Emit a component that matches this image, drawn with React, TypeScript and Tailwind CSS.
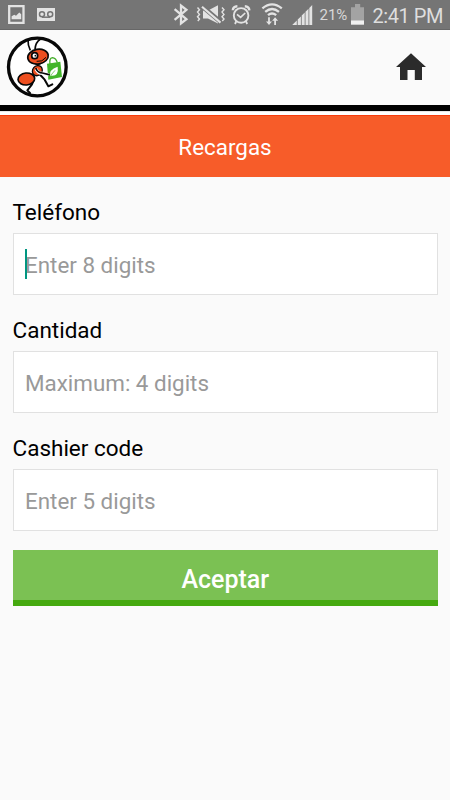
function StatusBar() {
  return (
    <div className="flex h-[30px] items-start border-b border-[#676767] bg-[#757575] text-[#e3e3e3]">
      {/* Screenshot notification */}
      <svg className="ml-[8px] shrink-0" width="17" height="29" viewBox="8 0 17 29">
        <path d="M9.2 6.2H23.5V22.8H9.2Z" fill="none" stroke="currentColor" strokeWidth="2.3" />
        <path d="M11.6 19.2V16.2L14.3 14.8L16 15.8L19.3 12.5L21.2 14.2V19.2Z" fill="currentColor" />
      </svg>
      {/* Voicemail */}
      <svg className="ml-[12px] shrink-0" width="18" height="29" viewBox="37 0 18 29">
        <path d="M37 8H55V21H37Z" fill="currentColor" />
        <g fill="none" stroke="#757575" strokeWidth="1.5">
          <circle cx="42" cy="14.2" r="2.5" />
          <circle cx="50.2" cy="14.2" r="2.5" />
          <path d="M42 17.2H50.2" />
        </g>
      </svg>

      {/* Bluetooth */}
      <svg className="ml-[118px] shrink-0" width="16" height="29" viewBox="173 0 16 29">
        <path
          d="M174.6 9.2L186.4 19.2L181 23.4V5.6L186.4 9.8L174.6 19.8"
          fill="none"
          stroke="currentColor"
          strokeWidth="2.3"
        />
      </svg>
      {/* Muted, vibrate */}
      <svg className="ml-[7px] shrink-0" width="30" height="29" viewBox="196 0 30 29">
        <path d="M203 10.5H208L218 5.2V23.4L208 18.4H203Z" fill="currentColor" />
        <path d="M201.5 5.8L221.5 22.8" stroke="#757575" strokeWidth="4.6" />
        <path d="M202 6.8L220.5 22.6" stroke="currentColor" strokeWidth="2.1" />
        <g fill="none" stroke="currentColor" strokeWidth="1.4">
          <path d="M197.5 7.5L199.5 9.8L197.5 12.1L199.5 14.4L197.5 16.7L199.5 19L197.8 21" />
          <path d="M222 7.5L224 9.8L222 12.1L224 14.4L222 16.7L224 19L222.3 21" />
        </g>
      </svg>
      {/* Alarm */}
      <svg className="ml-[5px] shrink-0" width="20" height="29" viewBox="231 0 20 29">
        <g fill="none" stroke="currentColor">
          <circle cx="241.1" cy="15.4" r="7.3" strokeWidth="1.9" />
          <path d="M237 14.3L240.6 17.3L245.2 13" strokeWidth="1.7" />
          <path d="M232.8 10.3Q233 6.5 237.4 6.3M244.8 6.3Q249 6.5 249.4 10.3" strokeWidth="2.4" />
          <path d="M236.4 21L235 24M245.8 21L247.2 24" strokeWidth="1.8" />
        </g>
      </svg>
      {/* Wi-Fi with traffic arrows */}
      <svg className="ml-[10px] shrink-0" width="22" height="29" viewBox="261 0 22 29">
        <g fill="none" stroke="currentColor" strokeWidth="2.3">
          <path d="M262.4 8.4Q272 .3 281.8 8.4" />
          <path d="M265.2 11.9Q272 6.1 279 11.9" />
          <path d="M268 15.2Q272 11.7 276.2 15.2" />
        </g>
        <path d="M268.1 17.2H269.9V21.5H272L269 25L266 21.5H268.1Z" fill="currentColor" />
        <path d="M274.2 25H276V20.7H278.1L275.1 17.2L272.1 20.7H274.2Z" fill="currentColor" />
      </svg>
      {/* Signal strength */}
      <svg className="ml-[9px] shrink-0" width="21" height="29" viewBox="292 0 21 29">
        <path
          d="M292.2 25L296.8 20.4V25ZM297.7 19.6L300.9 16.4V25H297.7ZM301.7 15.6L304.7 12.5V25H301.7ZM305.5 11.7L308.5 8.8V25H305.5ZM309.3 7.9L312.2 5V25H309.3Z"
          fill="currentColor"
        />
      </svg>
      <span className="ml-[6.5px] w-[28px] shrink-0 whitespace-nowrap text-[15px] leading-[31px] text-[#d8d8d8]">21%</span>
      {/* Battery */}
      <svg className="ml-[3.5px] shrink-0" width="13" height="29" viewBox="351 0 13 29">
        <path d="M355 4H360.2V7.2H364V21H351V7.2H355Z" fill="#a3a3a3" />
        <path d="M351 20.5H364V24.7H351Z" fill="#f0f0f0" />
      </svg>
      <span className="ml-[8.5px] whitespace-nowrap text-[20px] leading-[32px] tracking-[-0.45px] text-[#dedede]">2:41 PM</span>
    </div>
  );
}

function AntLogo() {
  return (
    <svg width="80" height="75" viewBox="0 0 240 225" className="block">
      <circle cx="112" cy="111" r="86.5" fill="#fff" stroke="#080808" strokeWidth="10" />
      {/* Antennae */}
      <path
        d="M91 61Q83 45 84 28M105 58Q107 36 121 28"
        fill="none"
        stroke="#080808"
        strokeWidth="5"
      />
      {/* Legs */}
      <g fill="none" stroke="#080808" strokeLinecap="round" strokeLinejoin="round" strokeWidth="6">
        <path d="M99 135Q103 150 96 163L82 181L90 189" />
        <path d="M121 135L134 149L145 169L157 163" />
      </g>
      {/* Shopping bag */}
      <path d="M150 103Q147 84 157 83Q168 84 172 98" fill="none" stroke="#43ad29" strokeWidth="4" />
      <path d="M141 101L181 95L186 141L145 149Z" fill="#43b52b" />
      <path d="M151 139Q145 119 173 110Q177 138 155 137Z" fill="#fff" />
      <path d="M148 145Q155 131 165 121" fill="none" stroke="#43b52b" strokeWidth="2" />
      {/* Body */}
      <ellipse cx="79" cy="147" rx="25" ry="18" transform="rotate(-5 79 147)" fill="#ee4f20" stroke="#080808" strokeWidth="5" />
      <ellipse cx="112" cy="122" rx="14" ry="16" transform="rotate(40 112 122)" fill="#ee4f20" stroke="#080808" strokeWidth="4" />
      <path d="M108 117Q114 130 127 130L147 134" fill="none" stroke="#fff" strokeWidth="9" />
      <path d="M108 116Q114 129 127 129L147 134" fill="none" stroke="#080808" strokeWidth="5" strokeLinecap="round" />
      <path d="M101 98Q111 112 129 99" fill="#080808" />
      <ellipse cx="114" cy="80" rx="31" ry="22" transform="rotate(-10 114 80)" fill="#ee4f20" stroke="#080808" strokeWidth="5" />
      <circle cx="104" cy="77" r="9" fill="#fff" stroke="#080808" strokeWidth="5" />
      <circle cx="106" cy="77" r="2.5" fill="#080808" />
      <path d="M110 94Q127 97 138 82" fill="none" stroke="#080808" strokeWidth="3" />
    </svg>
  );
}

function Header() {
  return (
    <header className="flex h-[81px] justify-between border-b-[6px] border-black bg-[#fafafa]">
      <AntLogo />
      <svg width="30" height="75" viewBox="0 0 30 75" className="mr-[24px]" aria-label="Home">
        <path d="M15 23.3L30 37H26V50H18.8V40H11.5V50H4V37H0Z" fill="#2b2b2b" />
      </svg>
    </header>
  );
}

const fields = [
  { label: "Teléfono", placeholder: "Enter 8 digits", focused: true },
  { label: "Cantidad", placeholder: "Maximum: 4 digits", focused: false },
  { label: "Cashier code", placeholder: "Enter 5 digits", focused: false },
];

export default function App() {
  return (
    <main className="h-[800px] w-[450px] overflow-hidden bg-[#fafafa] font-['Roboto',sans-serif]">
      <StatusBar />
      <Header />
      <div className="h-[4px] border-t border-[#e8e8e8] bg-white" />

      <h1 className="h-[62px] border-t border-[#f73c0e] bg-[#f75c29] text-center text-[22.4px] leading-[63px] text-white">
        Recargas
      </h1>

      <form className="pr-[12.5px] pl-[13px] pt-[15px]">
        {fields.map((field) => (
          <div key={field.label} className="mb-[15px]">
            <label className="-ml-[0.5px] block h-[41px] text-[22.5px] leading-[40px] text-black">{field.label}</label>
            <div className="relative h-[62px] border border-[#e1e1e1] bg-white">
              <input
                type="text"
                placeholder={field.placeholder}
                className="block h-full w-full bg-transparent px-[11px] pt-[1px] text-[22.4px] text-black outline-none placeholder:text-[#999999]"
              />
              {field.focused && <span className="absolute top-[15px] left-[11px] h-[30px] w-[2px] bg-[#009681]" />}
            </div>
          </div>
        ))}
        <button
          type="button"
          className="mt-[19px] block h-[56px] w-full border-b-[6px] border-[#45a910] bg-[#7bc153] pt-[10px] text-[25px] leading-[40px] font-medium text-white"
        >
          Aceptar
        </button>
      </form>
    </main>
  );
}
